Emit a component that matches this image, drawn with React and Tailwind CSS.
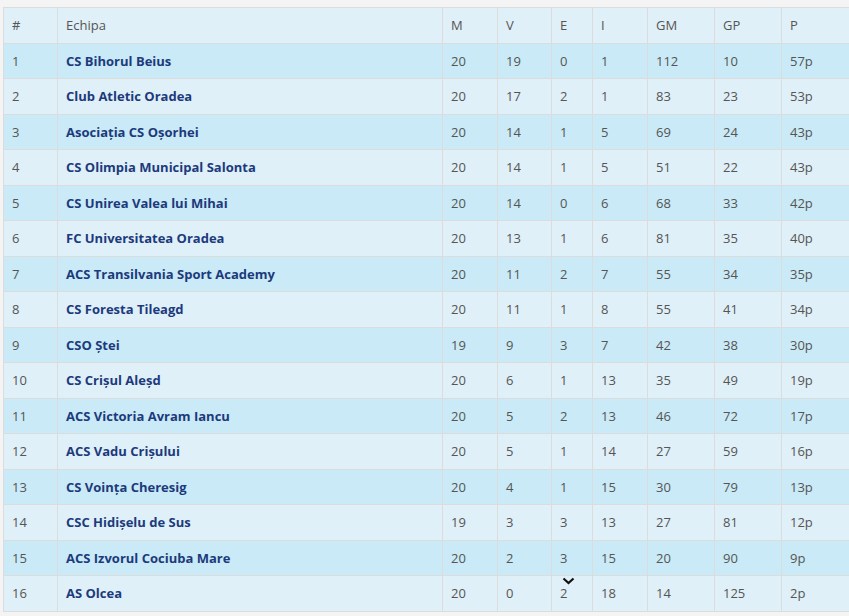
import React from "react";

const rows = [
  [1, "CS Bihorul Beius", 20, 19, 0, 1, 112, 10, "57p"],
  [2, "Club Atletic Oradea", 20, 17, 2, 1, 83, 23, "53p"],
  [3, "Asociația CS Oșorhei", 20, 14, 1, 5, 69, 24, "43p"],
  [4, "CS Olimpia Municipal Salonta", 20, 14, 1, 5, 51, 22, "43p"],
  [5, "CS Unirea Valea lui Mihai", 20, 14, 0, 6, 68, 33, "42p"],
  [6, "FC Universitatea Oradea", 20, 13, 1, 6, 81, 35, "40p"],
  [7, "ACS Transilvania Sport Academy", 20, 11, 2, 7, 55, 34, "35p"],
  [8, "CS Foresta Tileagd", 20, 11, 1, 8, 55, 41, "34p"],
  [9, "CSO Ștei", 19, 9, 3, 7, 42, 38, "30p"],
  [10, "CS Crișul Aleșd", 20, 6, 1, 13, 35, 49, "19p"],
  [11, "ACS Victoria Avram Iancu", 20, 5, 2, 13, 46, 72, "17p"],
  [12, "ACS Vadu Crișului", 20, 5, 1, 14, 27, 59, "16p"],
  [13, "CS Voința Cheresig", 20, 4, 1, 15, 30, 79, "13p"],
  [14, "CSC Hidișelu de Sus", 19, 3, 3, 13, 27, 81, "12p"],
  [15, "ACS Izvorul Cociuba Mare", 20, 2, 3, 15, 20, 90, "9p"],
  [16, "AS Olcea", 20, 0, 2, 18, 14, 125, "2p"],
];

const headers = ["#", "Echipa", "M", "V", "E", "I", "GM", "GP", "P"];
const widths = [54, 385, 55, 54, 41, 55, 67, 67, 80];

export default function App() {
  return (
    <div
      className="w-[849px] h-[616px] bg-[#f4f4f4] overflow-hidden relative"
      style={{ fontFamily: '"Open Sans", sans-serif' }}
    >
      <div className="pt-[7px] pl-[3px]">
        <table className="border-collapse table-fixed w-[858px] text-[13px] text-[#555]">
          <colgroup>
            {widths.map((w, i) => (
              <col key={i} style={{ width: w }} />
            ))}
          </colgroup>
          <thead>
            <tr className="bg-[#e0f0f8]">
              {headers.map((h) => (
                <th
                  key={h}
                  className="border border-[#dcdcdc] text-left font-normal px-[8px] py-[8px] leading-[18.5px]"
                >
                  {h}
                </th>
              ))}
            </tr>
          </thead>
          <tbody>
            {rows.map((r, i) => (
              <tr key={i} className={i % 2 === 0 ? "bg-[#c9eaf6]" : "bg-[#e0f0f8]"}>
                {r.map((c, j) => (
                  <td
                    key={j}
                    className={
                      "border border-[#dcdcdc] px-[8px] py-[8px] leading-[18.5px] whitespace-nowrap " +
                      (j === 1 ? "font-bold text-[#1c3a7c]" : "")
                    }
                  >
                    {c}
                  </td>
                ))}
              </tr>
            ))}
          </tbody>
        </table>
      </div>
      <svg
        className="absolute left-[562px] top-[577px]"
        width="13"
        height="8"
        viewBox="0 0 13 8"
      >
        <path d="M1.5 1.5 L6.5 6 L11.5 1.5" fill="none" stroke="#111" strokeWidth="2.2" />
      </svg>
    </div>
  );
}
